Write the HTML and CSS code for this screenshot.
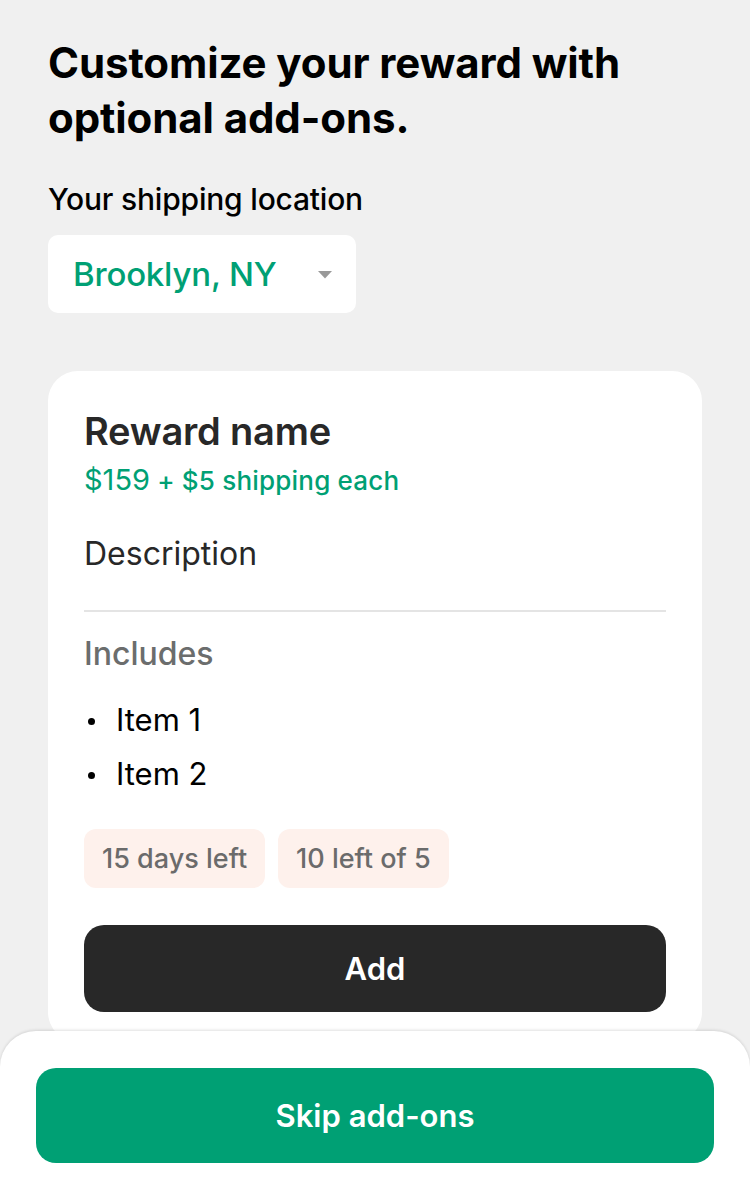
FILE: index.html
```html
<!DOCTYPE html>
<html lang="en">
<head>
<meta charset="utf-8">
<title>Add-ons</title>
<link rel="stylesheet" href="styles.css">
</head>
<body>
<main class="page">
  <h1 class="title">Customize your reward with optional add-ons.</h1>
  <div class="ship-label">Your shipping location</div>
  <div class="select">
    <span class="select-text">Brooklyn, NY</span>
    <svg class="caret" width="14" height="8" viewBox="0 0 14 8"><path d="M0 0H14L7 7.5Z" fill="#999"/></svg>
  </div>
  <section class="card">
    <h2 class="reward-name">Reward name</h2>
    <div class="price"><span class="amount">$159</span> + $5 shipping each</div>
    <p class="desc">Description</p>
    <hr class="divider">
    <div class="includes">Includes</div>
    <ul class="items">
      <li>Item 1</li>
      <li>Item 2</li>
    </ul>
    <div class="tags">
      <span class="tag">15 days left</span>
      <span class="tag">10 left of 5</span>
    </div>
    <button class="btn btn-add">Add</button>
  </section>
</main>
<footer class="sheet">
  <button class="btn btn-skip">Skip add-ons</button>
</footer>
</body>
</html>
```
FILE: styles.css
```css
* { box-sizing: border-box; }
html, body { margin: 0; padding: 0; }
body {
  background: #f0f0f0;
  font-family: Inter, "Noto Sans", sans-serif;
  color: #000;
  height: 1200px;
  overflow: hidden;
}
.page {
  padding: 35px 48px 0 48px;
}
.title {
  margin: 0;
  font-size: 42px;
  line-height: 55px;
  font-weight: 700;
  letter-spacing: -0.1px;
  width: 640px;
}
.ship-label {
  margin-top: 36px;
  font-size: 30px;
  font-weight: 500;
  line-height: 36px;
  letter-spacing: -0.2px;
}
.select {
  margin-top: 18px;
  width: 308px;
  height: 78px;
  background: #fff;
  border-radius: 10px;
  display: flex;
  align-items: center;
  padding: 0 24px 0 25px;
  justify-content: space-between;
}
.select-text {
  color: #00a074;
  font-size: 33px;
  font-weight: 500;
  letter-spacing: -0.2px;
}
.caret { margin-top: 1px; }
.card {
  margin-top: 58px;
  width: 654px;
  background: #fff;
  border-radius: 30px;
  padding: 37px 36px 30px 36px;
}
.reward-name {
  margin: 0;
  font-size: 38px;
  line-height: 46px;
  font-weight: 600;
  color: #282828;
  letter-spacing: -0.2px;
}
.price {
  margin-top: 8px;
  color: #00a074;
  font-size: 26px;
  font-weight: 500;
  line-height: 36px;
  letter-spacing: 0.2px;
}
.amount { font-size: 29px; font-weight: 400; letter-spacing: 0; }
.desc {
  margin: 35px 0 0;
  font-size: 32px;
  line-height: 40px;
  color: #282828;
}
.divider {
  margin: 36px 0 0;
  border: 0;
  height: 2px;
  background: #e4e4e4;
}
.includes {
  margin-top: 22px;
  font-size: 32px;
  font-weight: 500;
  line-height: 40px;
  color: #6b6d6d;
}
.items {
  margin: 19px 0 0;
  padding: 0;
  list-style: none;
  font-size: 31px;
  line-height: 54px;
  color: #000;
}
.items li {
  display: flex;
  align-items: center;
}
.items li::before {
  content: "";
  width: 7px;
  height: 7px;
  border-radius: 50%;
  background: #000;
  margin: 2px 21px 0 4px;
}
.tags {
  margin-top: 28px;
  display: flex;
  gap: 13px;
}
.tag {
  height: 59px;
  display: inline-flex;
  align-items: center;
  padding: 0 18px;
  background: #fef1ec;
  border-radius: 12px;
  color: #6b6b6b;
  font-size: 27px;
  font-weight: 500;
}
.btn {
  display: block;
  width: 100%;
  border: 0;
  font-family: inherit;
  color: #fff;
  font-size: 31px;
  font-weight: 600;
}
.btn-add {
  margin-top: 37px;
  height: 87px;
  background: #282828;
  border-radius: 20px;
}
.sheet {
  position: fixed;
  left: 0;
  right: 0;
  bottom: 0;
  height: 169px;
  background: #fff;
  border-radius: 36px 36px 0 0;
  box-shadow: 0 -1px 3px rgba(0,0,0,0.12);
  padding: 37px 36px 0 36px;
}
.btn-skip {
  height: 95px;
  background: #00a074;
  border-radius: 20px;
}
```
